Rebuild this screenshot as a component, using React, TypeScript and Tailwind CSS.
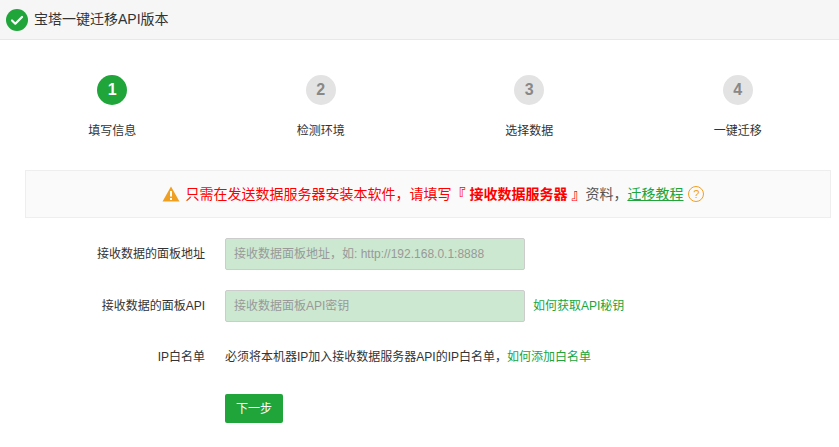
export default function App() {
  const steps = ["填写信息", "检测环境", "选择数据", "一键迁移"];
  const font = { fontFamily: '"Liberation Sans","Noto Sans CJK SC",sans-serif' };
  return (
    <div className="w-[839px] h-[447px] bg-white overflow-hidden text-[#333]" style={font}>
      <div className="h-[40px] bg-[#f6f6f6] border-b border-[#e8e8e8] flex items-center pl-[6px] gap-[6px]">
        <svg width="22" height="22" viewBox="0 0 22 22">
          <circle cx="11" cy="11" r="11" fill="#20a53a" />
          <path d="M6 11.5l3.3 3.2L16 8" stroke="#fff" strokeWidth="2.2" fill="none" strokeLinecap="round" strokeLinejoin="round" />
        </svg>
        <span className="text-[14px] text-[#333]">宝塔一键迁移API版本</span>
      </div>
      <div className="ml-[8px] w-[834px] grid grid-cols-4 mt-[35px]">
        {steps.map((s, i) => (
          <div key={s} className="flex flex-col items-center">
            <div className={`w-[30px] h-[30px] rounded-full flex items-center justify-center text-[16px] font-bold ${i === 0 ? "bg-[#20a53a] text-white" : "bg-[#e3e3e3] text-[#888]"}`}>{i + 1}</div>
            <div className="text-[12px] mt-[17px] text-[#333]">{s}</div>
          </div>
        ))}
      </div>
      <div className="mx-[25px] mt-[30px] h-[48px] w-[806px] bg-[#fafafa] border border-[#eee] flex items-center justify-center text-[14px] text-[#f00] pl-[10px]">
        <svg width="18" height="16" viewBox="0 0 18 16" className="mr-[6px]">
          <path d="M9 0.5L17.5 15.5H0.5z" fill="#f0a020" />
          <rect x="8" y="5" width="2" height="5.5" fill="#fff" />
          <rect x="8" y="12" width="2" height="2" fill="#fff" />
        </svg>
        <span>只需在发送数据服务器安装本软件，请填写</span>
        <span className="font-bold">『 接收数据服务器 』</span>
        <span className="text-[#555]">资料，</span>
        <span className="text-[#20a53a] underline">迁移教程</span>
        <span className="ml-[5px] w-[16px] h-[16px] rounded-full border border-[#f0a020] text-[#f0a020] text-[11px] flex items-center justify-center">?</span>
      </div>
      <div className="mt-[20px] flex flex-col text-[12px]">
        <div className="flex items-center h-[32px]">
          <div className="w-[205px] text-right pr-0 text-[#333]">接收数据的面板地址</div>
          <input className="ml-[20px] w-[300px] h-[32px] bg-[#cce8d0] border border-[#ccc] rounded-[2px] px-[8px] text-[12px] placeholder:text-[#999] outline-none" placeholder="接收数据面板地址，如: http://192.168.0.1:8888" />
        </div>
        <div className="flex items-center h-[32px] mt-[20px]">
          <div className="w-[205px] text-right text-[#333]">接收数据的面板API</div>
          <input className="ml-[20px] w-[300px] h-[32px] bg-[#cce8d0] border border-[#ccc] rounded-[2px] px-[8px] text-[12px] placeholder:text-[#999] outline-none" placeholder="接收数据面板API密钥" />
          <span className="ml-[8px] text-[#20a53a]">如何获取API秘钥</span>
        </div>
        <div className="flex items-center h-[32px] mt-[19px]">
          <div className="w-[205px] text-right text-[#333]">IP白名单</div>
          <div className="ml-[20px] text-[#333]">必须将本机器IP加入接收数据服务器API的IP白名单，<span className="text-[#20a53a]">如何添加白名单</span></div>
        </div>
        <div className="ml-[225px] mt-[21px]">
          <button className="w-[58px] h-[29px] bg-[#20a53a] text-white text-[12px] rounded-[2px]">下一步</button>
        </div>
      </div>
    </div>
  );
}
